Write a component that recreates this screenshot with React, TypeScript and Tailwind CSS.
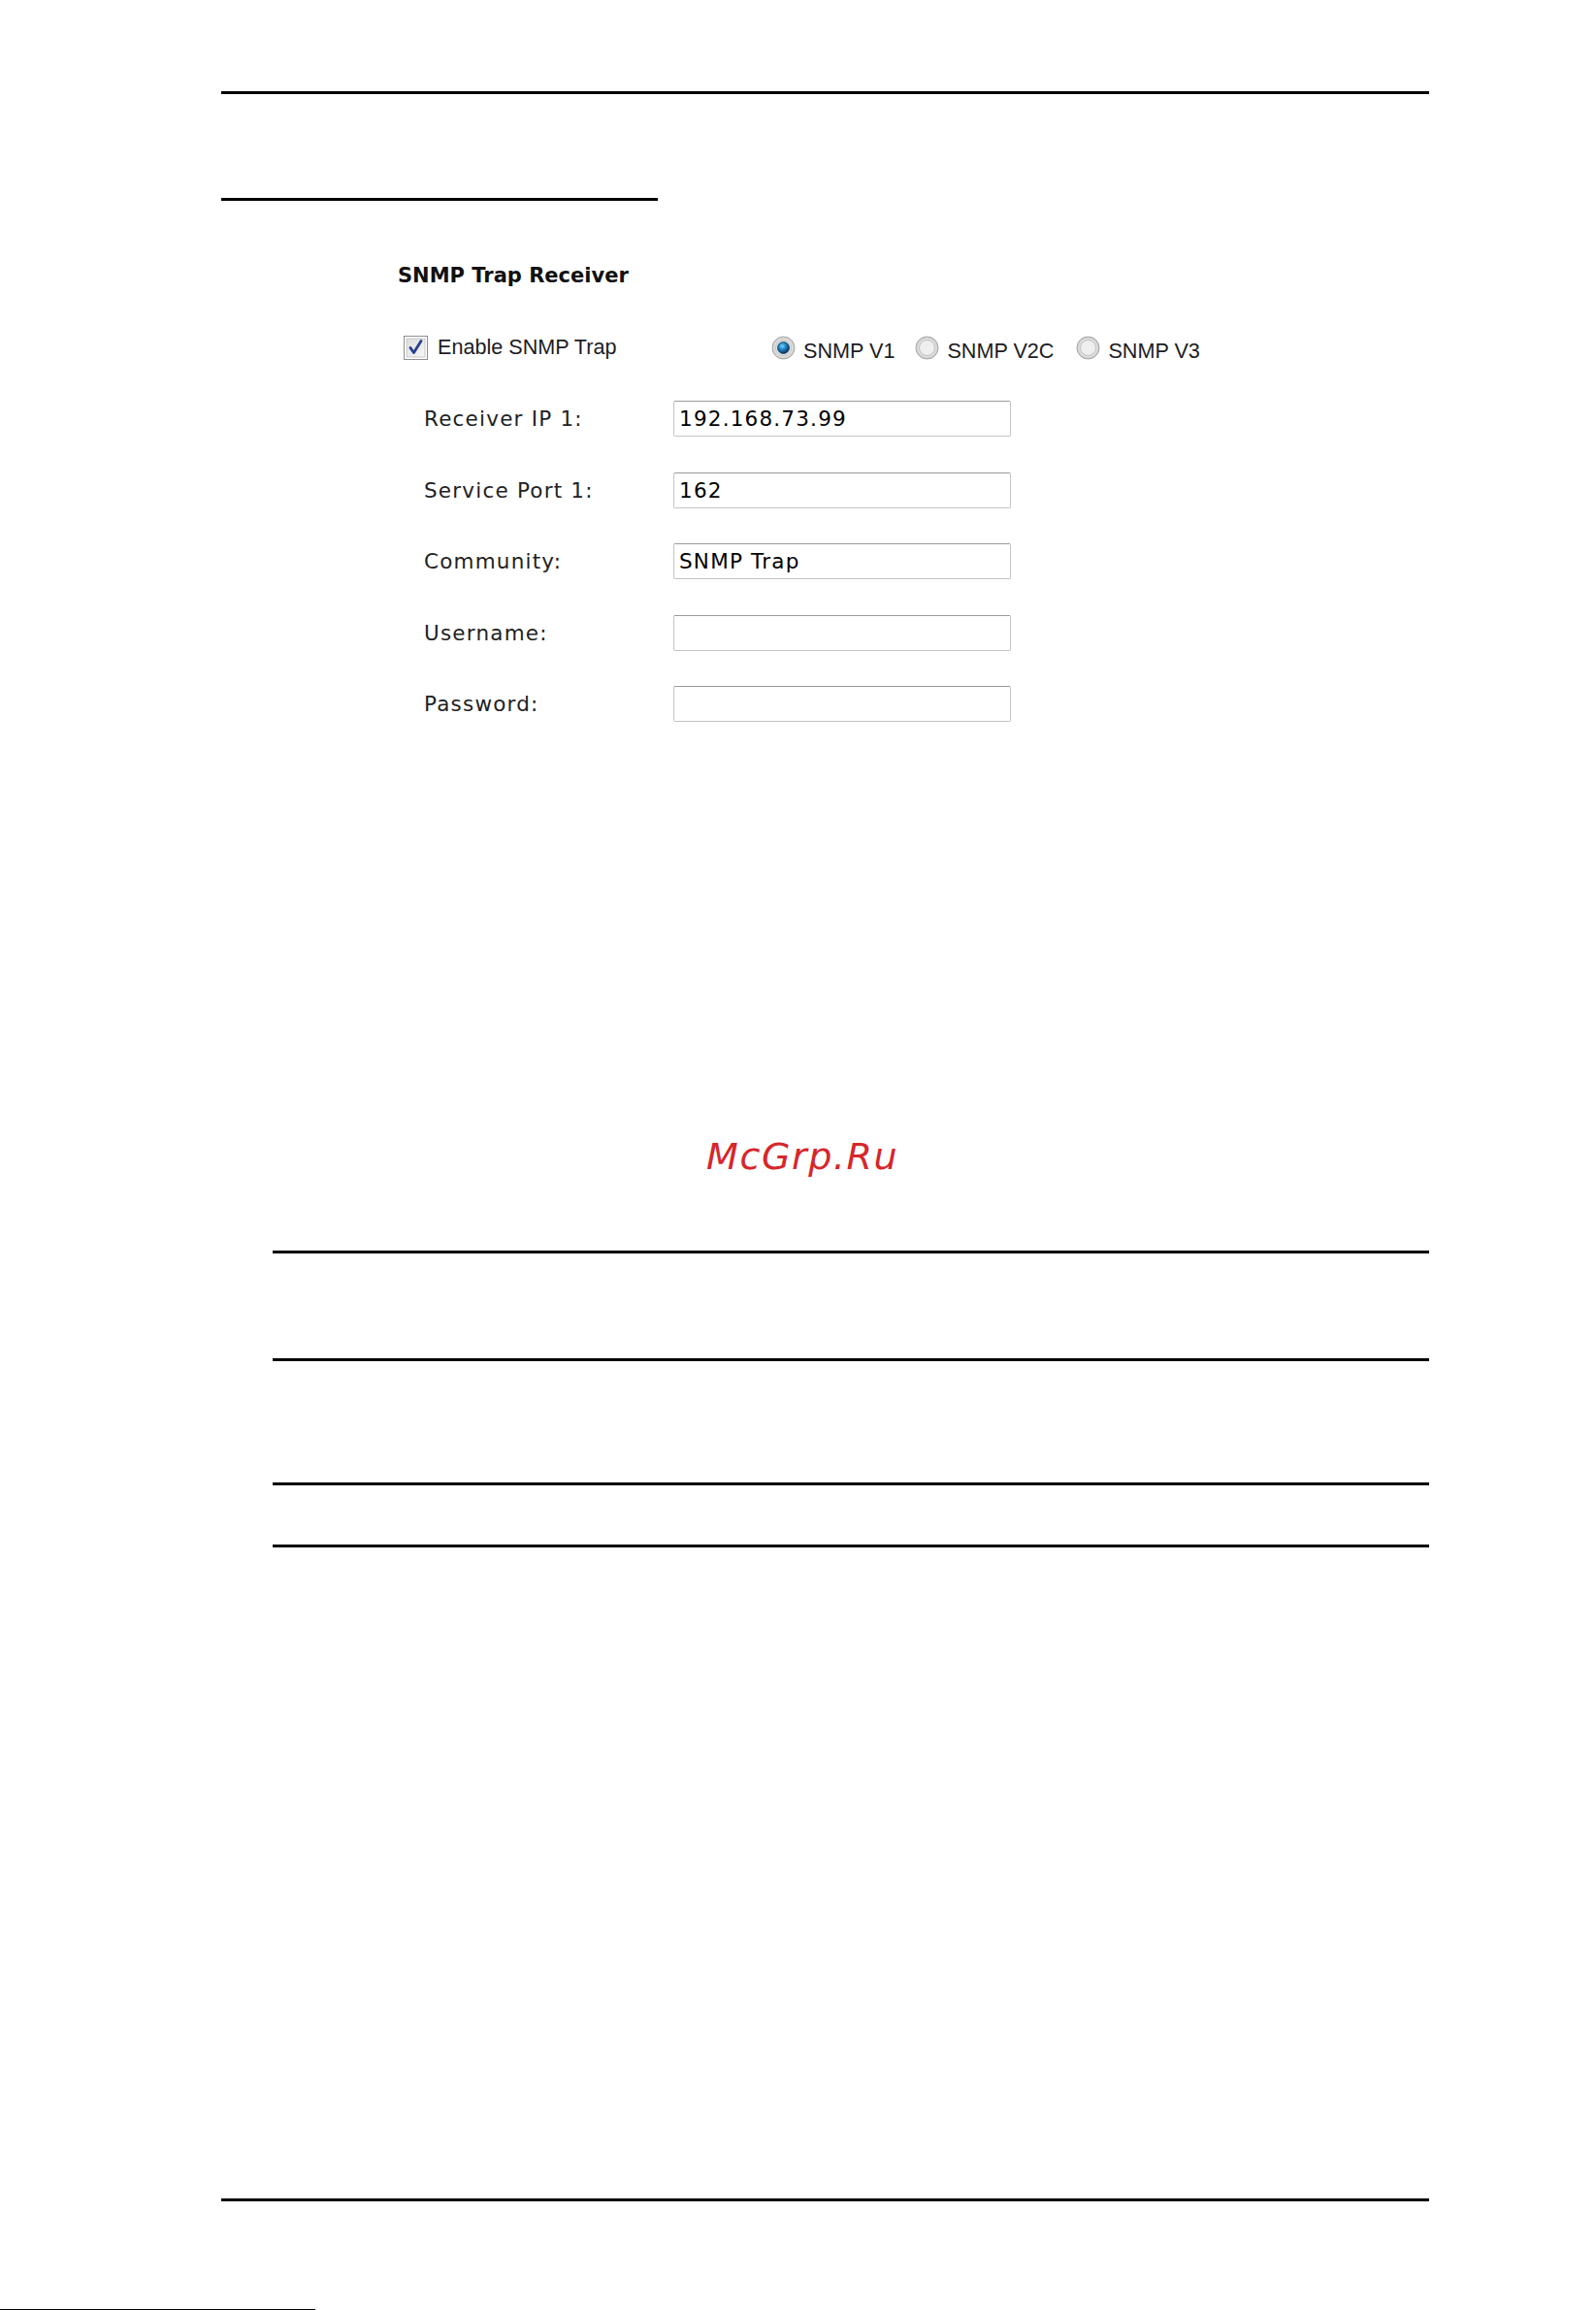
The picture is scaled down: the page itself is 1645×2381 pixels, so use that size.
import React from 'react';

const FIELDS = [
  { label: 'Receiver IP 1:', value: '192.168.73.99' },
  { label: 'Service Port 1:', value: '162' },
  { label: 'Community:', value: 'SNMP Trap' },
  { label: 'Username:', value: '' },
  { label: 'Password:', value: '' },
];

const VERSIONS = [
  { name: 'SNMP V1', checked: true, gap: 'mr-[21px]' },
  { name: 'SNMP V2C', checked: false, gap: 'mr-[23px]' },
  { name: 'SNMP V3', checked: false, gap: '' },
];

function CheckBox() {
  return (
    <svg width="25" height="25" viewBox="0 0 25 25">
      <defs>
        <linearGradient id="cbFill" x1="0" y1="0" x2="1" y2="1">
          <stop offset="0" stopColor="#dcdcdc" />
          <stop offset="1" stopColor="#f7f7f7" />
        </linearGradient>
      </defs>
      <rect x="0.5" y="0.5" width="24" height="24" fill="#fff" stroke="#8e8f8f" />
      <rect x="3" y="3" width="19" height="19" fill="url(#cbFill)" stroke="#c9c9c9" />
      <path d="M7 12.5 L10.5 17.5 L18 5.5" fill="none" stroke="#2b3f8f" strokeWidth="2.8" strokeLinecap="round" strokeLinejoin="round" />
    </svg>
  );
}

function Radio({ checked }: { checked: boolean }) {
  const id = checked ? 'rdOn' : 'rdOff';
  return (
    <svg width="25" height="25" viewBox="0 0 25 25">
      <defs>
        <radialGradient id={id + 'Ring'} cx="0.5" cy="0.5" r="0.5">
          <stop offset="0.6" stopColor="#f2f2f2" />
          <stop offset="1" stopColor="#c8c8c8" />
        </radialGradient>
        <radialGradient id={id + 'Dot'} cx="0.4" cy="0.35" r="0.6">
          <stop offset="0" stopColor="#7fd0f5" />
          <stop offset="0.5" stopColor="#1f86c6" />
          <stop offset="1" stopColor="#0b3d66" />
        </radialGradient>
      </defs>
      <circle cx="12.5" cy="12.5" r="11.5" fill={`url(#${id}Ring)`} stroke="#a6a6a6" strokeWidth="1" />
      <circle cx="12.5" cy="12.5" r="8" fill={checked ? '#e8e8e8' : '#efefef'} stroke="#bdbdbd" strokeWidth="1" />
      {checked && <circle cx="12.5" cy="12.5" r="6" fill={`url(#${id}Dot)`} stroke="#0f3a5c" strokeWidth="0.8" />}
    </svg>
  );
}

export default function App() {
  return (
    <div className="relative w-[1645px] h-[2381px] bg-white overflow-hidden flex flex-col">
      {/* page header rules */}
      <div className="mt-[94px] ml-[228px] w-[1245px] h-[3px] bg-black" />
      <div className="mt-[107px] ml-[228px] w-[450px] h-[3px] bg-black" />

      {/* SNMP panel */}
      <div className="ml-[410px] mt-[65px] flex flex-col">
        <h3 className="text-[21px] leading-[24px] font-bold text-[#111] font-['DejaVu_Sans',Verdana,sans-serif]">
          SNMP Trap Receiver
        </h3>

        <div className="mt-[49px] ml-[6px] flex items-center h-[26px] font-['Liberation_Sans',Arial,sans-serif] text-[21.6px] text-[#1c1c24]">
          <div className="w-[379px] flex items-center">
            <CheckBox />
            <span className="ml-[10px]">Enable SNMP Trap</span>
          </div>
          {VERSIONS.map(v => (
            <div key={v.name} className={`flex items-center ${v.gap}`}>
              <Radio checked={v.checked} />
              <span className="ml-[8px] pt-[9px]">{v.name}</span>
            </div>
          ))}
        </div>

        <div className="mt-[42px] ml-[27px] flex flex-col gap-[36.5px] font-['DejaVu_Sans',Verdana,sans-serif] text-[21.5px] tracking-[1.2px]">
          {FIELDS.map(f => (
            <div key={f.label} className="flex items-center h-[37px]">
              <span className="w-[257px] pt-[2px] text-[#222]">{f.label}</span>
              <div className="w-[348px] h-[37px] flex items-center pl-[5px] pt-[2px] bg-white border border-[#c4c4c4] border-t-[#9a9a9a] rounded-[2px] text-black">
                {f.value}
              </div>
            </div>
          ))}
        </div>
      </div>

      {/* watermark */}
      <div className="mt-[426px] ml-[728px] text-[38px] leading-[44px] italic tracking-[1.6px] text-[#d7262b] font-['DejaVu_Sans',sans-serif]">
        McGrp.Ru
      </div>

      {/* table rules */}
      <div className="mt-[75px] ml-[281px] w-[1192px] h-[3px] bg-black" />
      <div className="mt-[108px] ml-[281px] w-[1192px] h-[3px] bg-black" />
      <div className="mt-[125px] ml-[281px] w-[1192px] h-[3px] bg-black" />
      <div className="mt-[61px] ml-[281px] w-[1192px] h-[3px] bg-black" />

      {/* footer */}
      <div className="mt-[671px] ml-[228px] w-[1245px] h-[3px] bg-black" />
      <div className="mt-[111px] w-[325px] h-px bg-black" />
    </div>
  );
}
